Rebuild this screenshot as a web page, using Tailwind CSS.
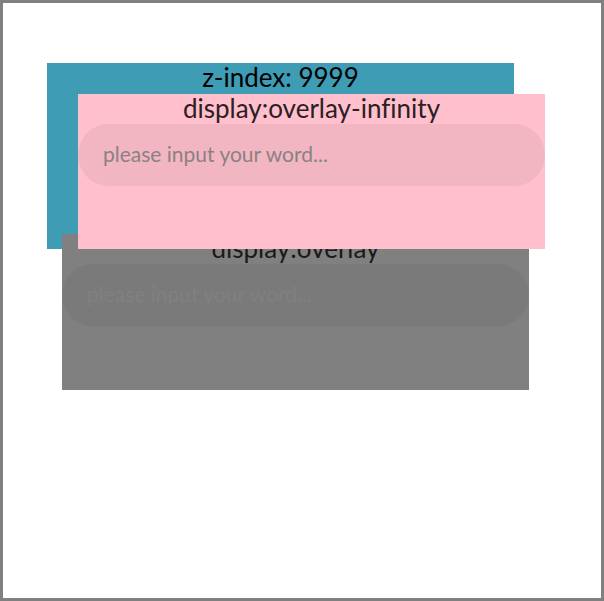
<!DOCTYPE html>
<html lang="en">
<head>
<meta charset="utf-8">
<meta name="viewport" content="width=device-width, initial-scale=1">
<title>Overlay stacking</title>
<script src="https://cdn.jsdelivr.net/npm/@tailwindcss/browser@4"></script>
</head>
<body class="bg-white font-['Lato','Noto_Sans',sans-serif] text-black [font-variant-ligatures:none]">
<main class="min-h-screen overflow-hidden border-3 border-[#808080] pt-15 pr-[87px] pl-11">
  <section class="relative h-[186px] bg-[#3e9cb5] text-center">
    <h1 class="pb-0.5 text-[26px] leading-[28px]">z-index: 9999</h1>
    <div class="absolute top-[171px] left-[15px] z-10 h-[156px] w-full bg-[#808080]">
      <label for="overlay" class="block pb-0.5 text-[26px] leading-[28px] text-[#1a1a1a]">display:overlay</label>
      <input id="overlay" type="text" placeholder="please input your word..." class="block h-[62px] w-full rounded-full bg-[#7a7a7a] px-[25px] pb-1 text-[21px] outline-none placeholder:text-[#808080]">
    </div>
    <div class="absolute top-[31px] left-[31px] z-20 h-[155px] w-full bg-[#ffbfcc]">
      <label for="infinity" class="block pb-0.5 text-[26px] leading-[28px] text-[#2b2023]">display:overlay-infinity</label>
      <input id="infinity" type="text" placeholder="please input your word..." class="block h-[62px] w-full rounded-full bg-[#f2b6c2] px-[25px] pb-1 text-[21px] outline-none placeholder:text-[#8b8184]">
    </div>
  </section>
</main>
</body>
</html>
